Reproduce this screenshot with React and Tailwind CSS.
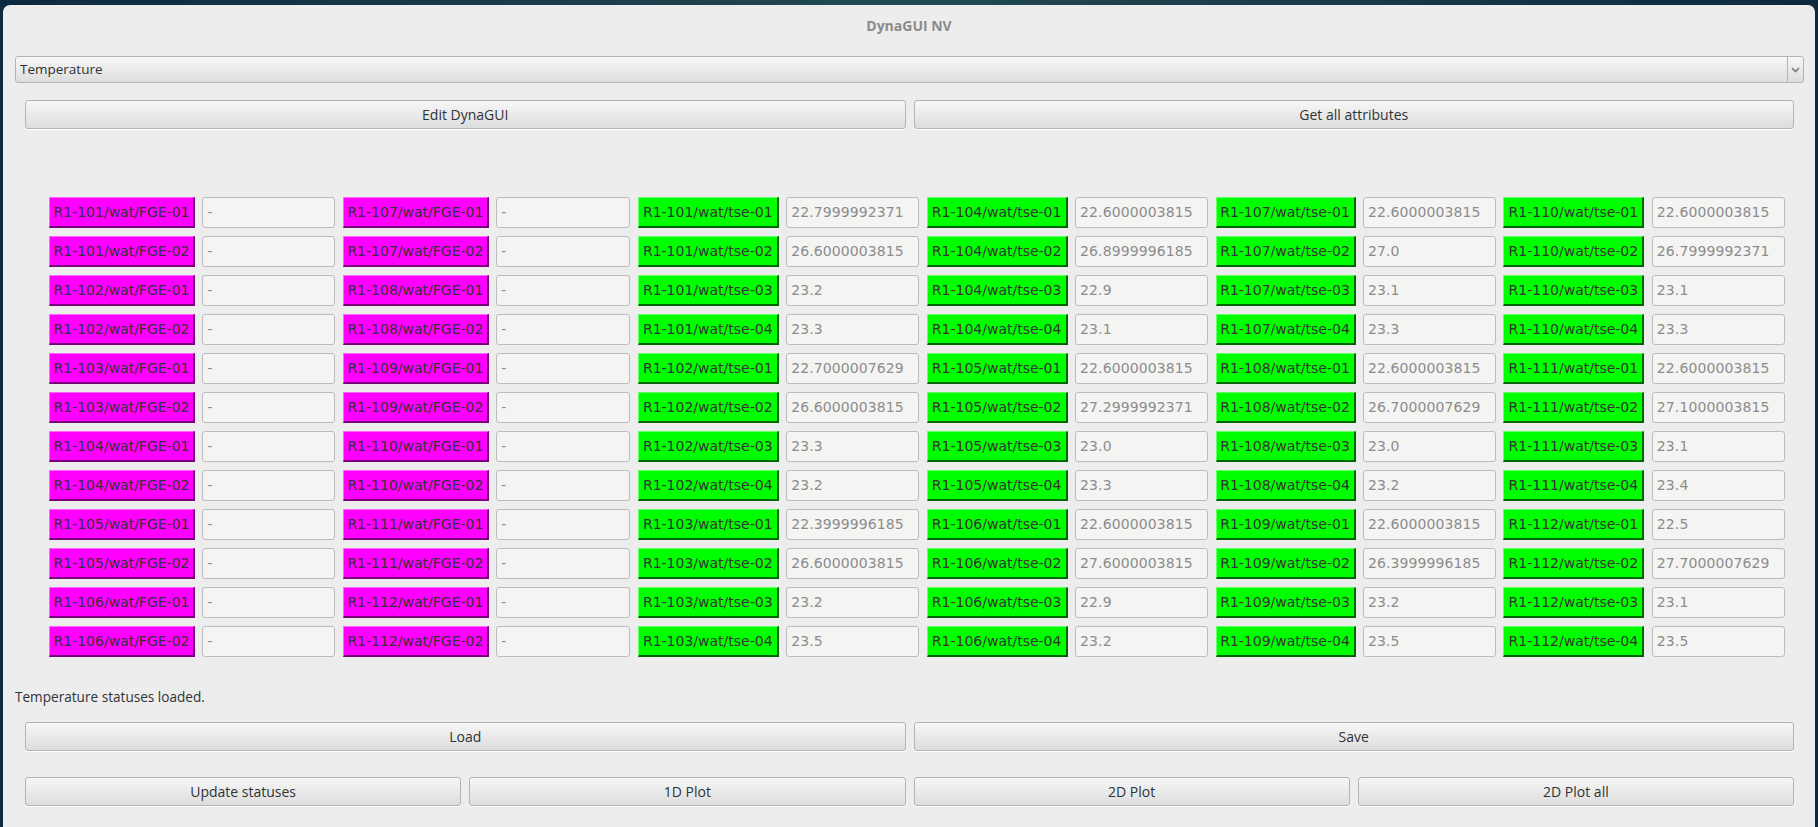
import React from "react";

const fge = (start) => {
    const rows = [];
    for (let n = start; n < start + 6; n++) {
        rows.push(`R1-${n}/wat/FGE-01`);
        rows.push(`R1-${n}/wat/FGE-02`);
    }
    return rows;
};

const tse = (start) => {
    const rows = [];
    for (let n = start; n < start + 3; n++) {
        for (let i = 1; i <= 4; i++) rows.push(`R1-${n}/wat/tse-0${i}`);
    }
    return rows;
};

const values = {
    101: ["22.7999992371", "26.6000003815", "23.2", "23.3"],
    102: ["22.7000007629", "26.6000003815", "23.3", "23.2"],
    103: ["22.3999996185", "26.6000003815", "23.2", "23.5"],
    104: ["22.6000003815", "26.8999996185", "22.9", "23.1"],
    105: ["22.6000003815", "27.2999992371", "23.0", "23.3"],
    106: ["22.6000003815", "27.6000003815", "22.9", "23.2"],
    107: ["22.6000003815", "27.0", "23.1", "23.3"],
    108: ["22.6000003815", "26.7000007629", "23.0", "23.2"],
    109: ["22.6000003815", "26.3999996185", "23.2", "23.5"],
    110: ["22.6000003815", "26.7999992371", "23.1", "23.3"],
    111: ["22.6000003815", "27.1000003815", "23.1", "23.4"],
    112: ["22.5", "27.7000007629", "23.1", "23.5"],
};

const tseValues = (start) => {
    const out = [];
    for (let n = start; n < start + 3; n++) out.push(...values[n]);
    return out;
};

const columns = [
    { kind: "fge", names: fge(101), vals: Array(12).fill("-") },
    { kind: "fge", names: fge(107), vals: Array(12).fill("-") },
    { kind: "tse", names: tse(101), vals: tseValues(101) },
    { kind: "tse", names: tse(104), vals: tseValues(104) },
    { kind: "tse", names: tse(107), vals: tseValues(107) },
    { kind: "tse", names: tse(110), vals: tseValues(110) },
];

function DeviceLabel({ kind, children }) {
    const colours = kind === "fge"
        ? "bg-[#ff00ff] border-t-[#ff66ff] border-l-[#ff66ff] border-b-[#7a007a] border-r-[#7a007a]"
        : "bg-[#00ff00] border-t-[#66ff66] border-l-[#66ff66] border-b-[#006400] border-r-[#006400]";
    return (
        <div className={`h-[31px] flex items-center justify-center border-t border-l border-b-2 border-r-2 text-[14px] text-[#333] whitespace-nowrap font-['DejaVu_Sans',sans-serif] ${colours}`}>
            {children}
        </div>
    );
}

function ValueBox({ children }) {
    return (
        <div className="h-[31px] flex items-center pl-[4px] bg-[#f4f4f3] border border-[#bcbcbc] rounded-[3px] text-[14px] tracking-[0.1px] text-[#8c8c8c] whitespace-nowrap font-['DejaVu_Sans',sans-serif]">
            {children}
        </div>
    );
}

function Button({ children }) {
    return (
        <button className="h-[29px] flex-1 flex items-center justify-center rounded-[3px] border border-[#b4b4b4] bg-gradient-to-b from-[#f7f7f7] to-[#dddddd] text-[#2e3436] text-[14px] shadow-[0_1px_0_#ffffff]">
            {children}
        </button>
    );
}

export default function App() {
    const cells = [];
    for (let r = 0; r < 12; r++) {
        columns.forEach((col, c) => {
            cells.push(<DeviceLabel key={`l${r}-${c}`} kind={col.kind}>{col.names[r]}</DeviceLabel>);
            cells.push(<ValueBox key={`v${r}-${c}`}>{col.vals[r]}</ValueBox>);
        });
    }

    return (
        <div className="w-[1818px] h-[827px] overflow-hidden bg-gradient-to-r from-[#0d2940] via-[#234a52] to-[#0d2940] pt-[5px] px-[3px] font-['Open_Sans',sans-serif]">
            <div className="h-[822px] bg-[#ededed] rounded-t-[7px] flex flex-col">
                {/* Title bar */}
                <div className="h-[41px] flex items-center justify-center text-[14px] font-bold text-[#8b8b8b]">
                    DynaGUI NV
                </div>

                <div className="pl-[12px] pr-[11px] flex flex-col">
                    {/* Combo box */}
                    <div className="mt-[10px] h-[27px] flex items-center rounded-[3px] border border-[#b4b4b4] bg-gradient-to-b from-[#f7f7f7] to-[#dddddd] text-[#2e3436] text-[13.5px]">
                        <span className="flex-1 pl-[4px]">Temperature</span>
                        <div className="w-[16px] h-[25px] border-l border-[#b4b4b4] flex items-center justify-center">
                            <svg width="9" height="6" viewBox="0 0 9 6">
                                <path d="M1 1 L4.5 4.5 L8 1" fill="none" stroke="#7a7a7a" strokeWidth="1.6" />
                            </svg>
                        </div>
                    </div>

                    <div className="mt-[17px] mx-[10px] flex gap-[8px]">
                        <Button>Edit DynaGUI</Button>
                        <Button>Get all attributes</Button>
                    </div>

                    {/* Device grid */}
                    <div className="mt-[68px] ml-[34px] grid grid-cols-[146px_133px_146px_134px_141px_133px_141px_133px_140px_133px_141px_133px] gap-x-[7.45px] gap-y-[8px]">
                        {cells}
                    </div>

                    <div className="mt-[30px] h-[20px] flex items-center text-[13.6px] text-[#2e3436]">
                        Temperature statuses loaded.
                    </div>

                    <div className="mt-[15px] mx-[10px] flex gap-[8px]">
                        <Button>Load</Button>
                        <Button>Save</Button>
                    </div>

                    <div className="mt-[26px] mx-[10px] flex gap-[8px]">
                        <Button>Update statuses</Button>
                        <Button>1D Plot</Button>
                        <Button>2D Plot</Button>
                        <Button>2D Plot all</Button>
                    </div>
                </div>
            </div>
        </div>
    );
}
